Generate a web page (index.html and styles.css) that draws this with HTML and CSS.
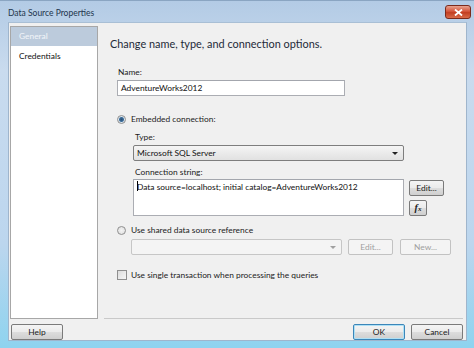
FILE: index.html
```html
<!DOCTYPE html>
<html lang="en">
<head>
    <meta charset="UTF-8">
    <title>Data Source Properties</title>
    <link rel="stylesheet" href="styles.css">
</head>
<body>
    <div class="window">
        <div class="titlebar">
            <span class="title">Data Source Properties</span>
            <button class="close-btn">
                <svg width="9" height="7" viewBox="0 0 9 7"><path d="M1 0.5 L8 6.5 M8 0.5 L1 6.5" stroke="#fff" stroke-width="1.8"/></svg>
            </button>
        </div>
        <div class="client">
            <div class="content">
                <ul class="nav">
                    <li class="active">General</li>
                    <li>Credentials</li>
                </ul>
                <div class="main">
                    <h2>Change name, type, and connection options.</h2>
                    <div class="form">
                        <label class="lbl name-lbl">Name:</label>
                        <div class="textbox name-box">AdventureWorks2012</div>

                        <div class="option opt-embedded">
                            <span class="radio checked"></span>
                            <span>Embedded connection:</span>
                        </div>
                        <div class="embedded">
                            <label class="lbl type-lbl">Type:</label>
                            <div class="select">
                                <span>Microsoft SQL Server</span>
                                <span class="arrow"></span>
                            </div>
                            <label class="lbl conn-lbl">Connection string:</label>
                            <div class="conn-row">
                                <div class="textbox conn-box"><span class="caret"></span>Data source=localhost; initial catalog=AdventureWorks2012</div>
                                <div class="conn-btns">
                                    <button class="btn edit-btn">Edit...</button>
                                    <button class="btn fx-btn"><i>f</i><small>x</small></button>
                                </div>
                            </div>
                        </div>

                        <div class="option opt-shared">
                            <span class="radio"></span>
                            <span>Use shared data source reference</span>
                        </div>
                        <div class="shared-row">
                            <div class="select disabled"><span></span><span class="arrow"></span></div>
                            <button class="btn disabled shared-edit">Edit...</button>
                            <button class="btn disabled shared-new">New...</button>
                        </div>

                        <div class="option opt-check">
                            <span class="checkbox"></span>
                            <span>Use single transaction when processing the queries</span>
                        </div>
                    </div>
                </div>
            </div>
            <div class="footer">
                <button class="btn help-btn">Help</button>
                <div class="footer-right">
                    <button class="btn ok-btn">OK</button>
                    <button class="btn">Cancel</button>
                </div>
            </div>
        </div>
    </div>
</body>
</html>
```

FILE: styles.css
```css
body {
    margin: 0;
    width: 474px;
    height: 348px;
    overflow: hidden;
    font-family: Lato, "Noto Sans", sans-serif;
    font-size: 8.4px;
    color: #1b1b1b;
}
.window {
    height: 348px;
    box-sizing: border-box;
    padding: 0 7px 7px 8px;
    display: flex;
    flex-direction: column;
    background: linear-gradient(to bottom, #b3cbe5 0%, #c9dbee 20%, #bcd6ee 70%, #8ed3ef 100%);
    border-top: 1px solid #8aa5c2;
}
.titlebar {
    height: 21px;
    display: flex;
    align-items: center;
    justify-content: space-between;
}
.title {
    color: #22354c;
    font-size: 8.5px;
    padding-top: 3px;
}
.close-btn {
    width: 26px;
    height: 14px;
    margin-right: -4px;
    margin-top: 1px;
    padding: 0;
    border: 1px solid #7a2a1c;
    border-radius: 3px;
    background: linear-gradient(to bottom, #e7a38f 0%, #d4553b 45%, #c23f22 55%, #d96b49 100%);
    display: flex;
    align-items: center;
    justify-content: center;
}
.client {
    flex: 1;
    background: #f0f0f0;
    display: flex;
    flex-direction: column;
    border: 1px solid #9fb5cc;
    border-top-color: #a9bfd5;
}
.content {
    display: flex;
    height: 293px;
    padding: 3px 0 0 1px;
}
.nav {
    list-style: none;
    margin: 0;
    padding: 0;
    width: 86px;
    background: #fff;
    border: 1px solid #a7a7a7;
}
.nav li {
    height: 19px;
    line-height: 19px;
    padding-left: 8px;
    color: #111;
}
.nav li.active {
    background: #bccbdc;
    color: #f2f5f9;
    margin-bottom: 1px;
}
.main {
    flex: 1;
    margin: 0 3px 0 6px;
    border-bottom: 1px solid #c9c9c9;
    padding-left: 6px;
}
.main h2 {
    margin: 10px 0 0;
    font-size: 10.9px;
    font-weight: normal;
    line-height: 16px;
    color: #1e2a38;
}
.form {
    padding-left: 7px;
}
.lbl {
    display: block;
    line-height: 12px;
    height: 12px;
}
.name-lbl {
    margin: 14px 0 2px 1px;
}
.textbox {
    background: #fff;
    border: 1px solid #abadb3;
    border-top-color: #a3a6ad;
    box-sizing: border-box;
    padding-left: 3px;
    color: #111;
}
.name-box {
    width: 228px;
    height: 16px;
    line-height: 14px;
}
.option {
    display: flex;
    align-items: center;
    height: 12px;
    line-height: 12px;
}
.opt-embedded {
    margin-top: 17px;
}
.radio {
    width: 9px;
    height: 9px;
    box-sizing: border-box;
    border: 1px solid #8f8f8f;
    border-radius: 50%;
    background: radial-gradient(circle, #f4f4f4, #dcdcdc);
    margin: 0 5px 0 0;
}
.radio.checked {
    background: radial-gradient(circle, #2a4f74 0, #3b6c99 2px, #dde6ee 3px, #e6e6e6 100%);
}
.embedded {
    padding-left: 16px;
}
.type-lbl {
    margin: 6px 0 2px 2px;
}
.select {
    width: 271px;
    height: 16px;
    box-sizing: border-box;
    border: 1px solid #7e7e7e;
    border-radius: 2px;
    background: linear-gradient(to bottom, #f5f5f5, #e1e1e1);
    display: flex;
    align-items: center;
    justify-content: space-between;
    padding: 0 5px 0 3px;
    color: #111;
}
.arrow {
    width: 0;
    height: 0;
    border-left: 3px solid transparent;
    border-right: 3px solid transparent;
    border-top: 3px solid #222;
}
.conn-lbl {
    margin: 5px 0 1px 2px;
}
.conn-row {
    display: flex;
    gap: 5px;
}
.conn-box {
    width: 271px;
    height: 37px;
    line-height: 14px;
    padding-left: 3px;
}
.caret {
    display: inline-block;
    width: 1px;
    height: 10px;
    background: #000;
    vertical-align: -1px;
    margin-right: -1px;
}
.conn-btns {
    display: flex;
    flex-direction: column;
    align-items: flex-start;
    gap: 4px;
    padding-top: 1px;
}
.btn {
    font-family: Lato, "Noto Sans", sans-serif;
    font-size: 8.4px;
    color: #1b1b1b;
    height: 16px;
    padding: 0;
    box-sizing: border-box;
    border: 1px solid #7a7a7a;
    border-radius: 2px;
    background: linear-gradient(to bottom, #f4f4f4 0%, #ebebeb 50%, #dddddd 51%, #cfcfcf 100%);
    line-height: 13px;
}
.edit-btn {
    width: 35px;
}
.fx-btn {
    width: 18px;
    font-family: "Liberation Serif", serif;
    font-weight: bold;
    font-size: 10px;
    line-height: 12px;
}
.fx-btn small {
    font-size: 7px;
    font-style: italic;
}
.opt-shared {
    margin-top: 8px;
}
.shared-row {
    display: flex;
    gap: 6px;
    margin: 3px 0 0 14px;
}
.select.disabled {
    width: 211px;
    border-color: #c6c6c6;
    background: #f4f4f4;
}
.select.disabled .arrow {
    border-top-color: #a0a0a0;
}
.btn.disabled {
    color: #a0a0a0;
    border-color: #c2c2c2;
    background: #f4f4f4;
}
.shared-edit {
    width: 45px;
}
.shared-new {
    width: 51px;
    margin-left: 1px;
}
.opt-check {
    margin-top: 14px;
}
.checkbox {
    width: 10px;
    height: 10px;
    box-sizing: border-box;
    border: 1px solid #8f8f8f;
    background: linear-gradient(135deg, #dcdcdc, #f6f6f6);
    margin-right: 4px;
}
.footer {
    display: flex;
    justify-content: space-between;
    padding: 5px 3px 0 2px;
}
.footer-right {
    display: flex;
    gap: 6px;
}
.help-btn {
    width: 52px;
}
.footer-right .btn {
    width: 52px;
}
.ok-btn {
    border-color: #3c86b9;
    box-shadow: inset 0 0 0 1px #aee0f5;
}
```
